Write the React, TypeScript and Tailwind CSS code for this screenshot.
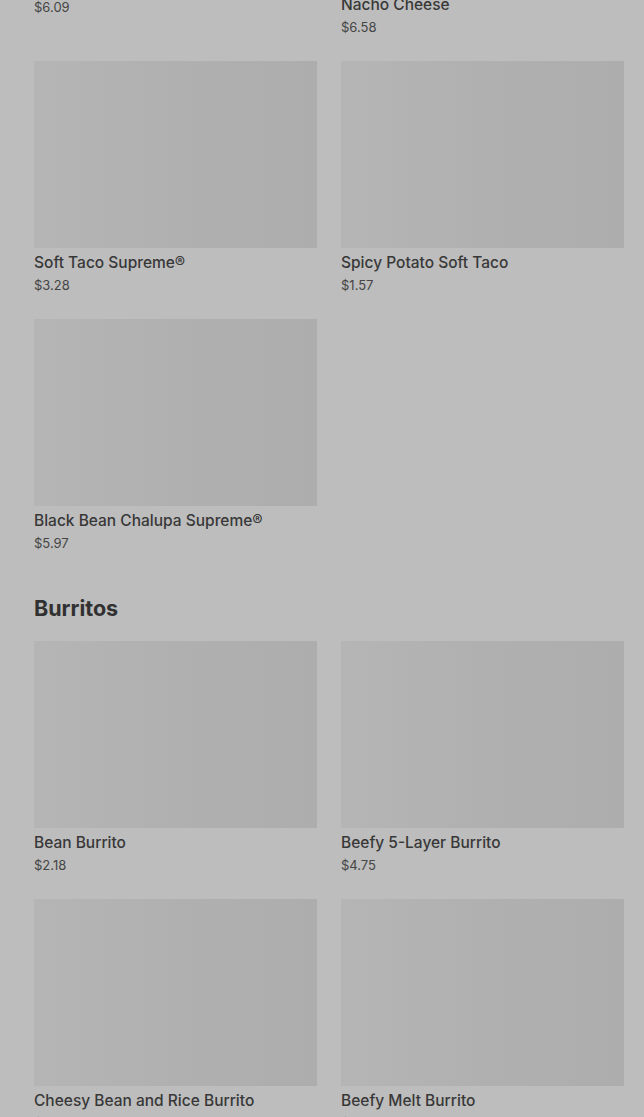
import React from 'react';

type Item = { name: string; price: string };

// Верхний ряд частично прокручен за край экрана
const tacosTop: Item[] = [
  { name: 'Nacho Cheese Doritos® Locos Tacos', price: '$6.09' },
  { name: 'Doritos® Locos Tacos Supreme®\nNacho Cheese', price: '$6.58' },
];

const tacos: Item[] = [
  { name: 'Soft Taco Supreme®', price: '$3.28' },
  { name: 'Spicy Potato Soft Taco', price: '$1.57' },
  { name: 'Black Bean Chalupa Supreme®', price: '$5.97' },
];

const burritos: Item[] = [
  { name: 'Bean Burrito', price: '$2.18' },
  { name: 'Beefy 5-Layer Burrito', price: '$4.75' },
  { name: 'Cheesy Bean and Rice Burrito', price: '$3.29' },
  { name: 'Beefy Melt Burrito', price: '$3.99' },
];

const MenuCard = ({ item }: { item: Item }) => (
  <div className="flex flex-col">
    <div className="h-[187px] w-full bg-gradient-to-r from-[#b5b5b5] via-[#b0b0b0] to-[#adadad]" />
    <div className="mt-[5px] whitespace-pre-line text-[15.5px] leading-5 font-medium text-[#383838]">{item.name}</div>
    <div className="mt-[2px] text-[13px] leading-5 text-[#454545]">{item.price}</div>
  </div>
);

const Grid = ({ items }: { items: Item[] }) => (
  <div className="grid grid-cols-2 gap-x-6 gap-y-6">
    {items.map((item) => (
      <MenuCard key={item.name} item={item} />
    ))}
  </div>
);

export default function App() {
  return (
    <div
      className="min-h-[1117px] w-full overflow-hidden bg-[#bdbdbd] pl-[34px] pr-5"
      style={{ fontFamily: 'Inter, "Noto Sans", sans-serif' }}
    >
      <div className="-mt-[217px] flex flex-col gap-6">
        <Grid items={tacosTop} />
        <Grid items={tacos} />
      </div>

      <h2 className="mt-[41px] mb-[19px] text-[21.5px] leading-7 font-bold text-[#313131]">Burritos</h2>

      <Grid items={burritos} />
    </div>
  );
}
